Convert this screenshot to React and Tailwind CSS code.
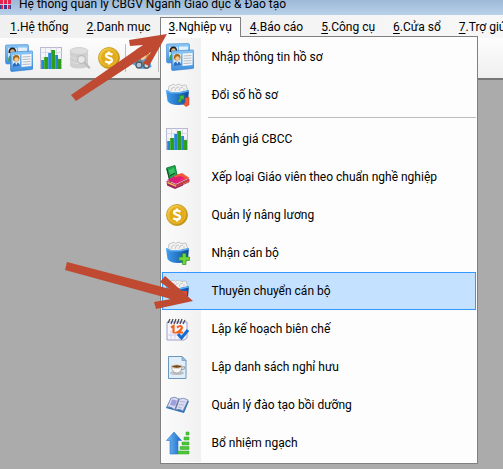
import React, { useState } from "react";

function CardsIcon() {
  return (
    <svg width="28" height="28" viewBox="0 0 28 28">
      <defs>
        <linearGradient id="card" x1="0" y1="0" x2="0" y2="1">
          <stop offset="0" stopColor="#8cc8f8" />
          <stop offset="1" stopColor="#3d8ede" />
        </linearGradient>
      </defs>
      <path d="M1.5 1 L22 .5 Q23.500 .5 23.500 2 V19 L2 20 Q.5 20 .5 18 V2 Q.5 1 1.500 1Z" fill="url(#card)" stroke="#3f86cc" strokeWidth=".6" />
      <path d="M3 4 H12 V17 H3Z" fill="#c8e4fa" />
      <path d="M3.500 9 Q3.500 3.500 7.500 3.500 Q11.500 3.500 11 9Z" fill="#1c1c1c" />
      <circle cx="7.500" cy="7.500" r="2.300" fill="#e8b880" />
      <path d="M3 17 Q3 11 7 11 L10 12 V17Z" fill="#37a347" />
      <path d="M13 3.500 H22 V8 H13Z" fill="#e4f0f9" />
      <path d="M6 8 L26.500 7 Q28 7 28 8.500 V24 Q28 25.500 26.500 25.500 L7 27.500 Q5.500 27.500 5.500 26 V9 Q5.500 8 6 8Z" fill="url(#card)" stroke="#347bc4" strokeWidth=".6" />
      <path d="M7.500 11 L15 10.500 V22.500 L7.500 23Z" fill="#d6ecfb" />
      <path d="M16.500 10.500 L26.500 10 V22 L16.500 23Z" fill="#f4f6f8" />
      <path d="M17.500 13 L25.500 12.500 M17.500 15.500 L25.500 15 M17.500 18 L25.500 17.500 M17.500 20.500 L25.500 20" stroke="#b1bbc5" strokeWidth="1" />
      <circle cx="11.200" cy="14.200" r="3.200" fill="#a8650f" />
      <circle cx="11.500" cy="15.500" r="2.200" fill="#f5c68e" />
      <path d="M7.500 23 Q7.500 18.500 11 18.500 Q15 18.500 15 22.500Z" fill="#2a6cc0" />
      <path d="M10.200 18.500 L11.300 21 L12.500 18.500Z" fill="#fff" />
    </svg>
  );
}

function ChartIcon() {
  return (
    <svg width="22" height="22" viewBox="0 0 22 22">
      <rect x=".5" y=".5" width="21" height="21" fill="#f4f5fb" stroke="#b8b8d0" />
      <path d="M5.500 0 V21 M11 0 V21 M16.500 0 V21 M0 5.500 H22 M0 11 H22 M0 16.500 H22" stroke="#ced0e2" strokeWidth=".7" />
      <path d="M1 13 H4 V22 H1Z M8 6 H11 V22 H8Z M15 8 H18 V22 H15Z" fill="#2884d8" />
      <path d="M4 10 H8 V22 H4Z M11 3 H15 V22 H11Z M18 12 H21 V22 H18Z" fill="#2f9c1d" />
      <path d="M1.500 13 V22 M8.500 6 V22 M15.500 8 V22" stroke="#4fa5e8" strokeWidth=".8" />
      <path d="M4.500 10 V22 M11.500 3 V22" stroke="#54b636" strokeWidth=".8" />
    </svg>
  );
}

function DatabaseIcon() {
  return (
    <svg width="22" height="22" viewBox="0 0 22 22">
      <path d="M1 4 V18 Q1 21.500 10 21.500 Q19 21.500 19 18 V4Z" fill="#d0d0d0" />
      <ellipse cx="10" cy="4" rx="9" ry="3.500" fill="#dedede" stroke="#c8c8c8" strokeWidth=".7" />
      <path d="M1 8.500 Q2 11.500 10 11.500 Q18 11.500 19 8.500 M1 13.500 Q2 16.500 10 16.500" fill="none" stroke="#dedede" />
      <circle cx="12.500" cy="12.500" r="4" fill="#e8e8e8" stroke="#bebebe" strokeWidth="1.300" />
      <path d="M15.500 15.500 L20 20.500" stroke="#bdbdbd" strokeWidth="2.500" strokeLinecap="round" />
    </svg>
  );
}

function CoinIcon() {
  return (
    <svg width="22" height="22" viewBox="0 0 22 22">
      <defs>
        <linearGradient id="coin" x1="0" y1="0" x2="1" y2="1">
          <stop offset="0" stopColor="#ffe05a" />
          <stop offset="1" stopColor="#b98200" />
        </linearGradient>
      </defs>
      <circle cx="11" cy="11" r="10.500" fill="url(#coin)" stroke="#c39213" strokeWidth=".8" />
      <circle cx="11" cy="11" r="8.300" fill="#e3ab18" stroke="#efc03a" strokeWidth=".8" />
      <path d="M14.500 7.800 Q11 5.500 8.500 7.200 Q6.800 9.500 11 10.800 Q15.300 12 13.500 14.500 Q11 16.500 7.200 14.200 M11 4.500 V7 M11 15 V17.500" fill="none" stroke="#fff" strokeWidth="2.300" />
    </svg>
  );
}

function FindUserIcon() {
  return (
    <svg width="22" height="22" viewBox="0 0 22 22">
      <path d="M1 17 Q3 11 11 11 Q20 11 20.500 20 Q16 22 11 22Z" fill="#5fa3e2" />
      <path d="M4 10 Q3 0 11 0 Q19 0 18 10 L15 12 H6Z" fill="#d99a50" />
      <path d="M7 6 Q11 3 15 6 Q15.500 13 11 13 Q6.500 13 7 6Z" fill="#f7cfa2" />
      <path d="M1 9 L5 8 L12 14 L17 15 L19 19 L15 21 L9 18 L4 16Z" fill="#7d8790" />
      <circle cx="8" cy="18" r="3" fill="#a9c6de" stroke="#4f5962" strokeWidth="1.300" />
      <circle cx="15.500" cy="18.500" r="2.700" fill="#c3d8e9" stroke="#4f5962" strokeWidth="1.300" />
    </svg>
  );
}

// blue box of files, shared by three entries with a different badge
function BoxIcon({ badge }) {
  return (
    <svg width="24" height="24" viewBox="0 0 24 24">
      <defs>
        <linearGradient id="box" x1="0" y1="0" x2="1" y2="0">
          <stop offset="0" stopColor="#3f9fec" />
          <stop offset="1" stopColor="#0d4aa3" />
        </linearGradient>
      </defs>
      <path d="M2 9 L3 3 L8 1 L9.500 2.500 L13 1 L15 2.500 L20 2 L22 8 L20 10 H4Z" fill="#f1f1f1" stroke="#b4b4b4" strokeWidth=".7" />
      <path d="M5 8 L6 5 L9 4 M9 8 L10 5 L13 4 M13 8 L14 5 L17 4 M18 8 V5" fill="none" stroke="#b9b9b9" strokeWidth=".7" />
      <path d="M0 7 L5 9 L14 9 L23 7 L22 18 Q21 22 12 22 Q4 22 1.500 18Z" fill="url(#box)" />
      <path d="M0 7 L5 9 L14 9 L23 7 V8.500 L14 10.500 H5 L.2 8.500Z" fill="#62b0ef" />
      {badge === "swap" && (
        <>
          <path d="M13 13 L18 12 V17 L16 16 L14 20 L12 18 L14 15Z" fill="#43bd35" stroke="#268020" strokeWidth=".5" />
          <path d="M19 15 L23 14 V22 L20 23.500 L17 21 L19 20Z" fill="#ed5735" stroke="#c13d24" strokeWidth=".5" />
        </>
      )}
      {badge === "plus" && <path d="M16.500 12.500 H20 V16 H23.500 V19.500 H20 V23.500 H16.500 V19.500 H13 V16 H16.500Z" fill="#70d638" stroke="#329425" strokeWidth=".7" />}
      {badge === "minus" && <path d="M15 12 H21 V17 H15Z" fill="#db4e35" />}
    </svg>
  );
}

function BooksIcon() {
  return (
    <svg width="24" height="24" viewBox="0 0 24 24">
      <path d="M.5 3 L9 .5 L11.500 12 L4 17Z" fill="#20a94c" stroke="#0b6b2b" strokeWidth=".8" />
      <path d="M3 5 L8 3 L9 8 L4 9Z" fill="#38c767" />
      <path d="M1 4 L4 16 M4 11 L9 8" stroke="#15452a" strokeWidth="1" />
      <path d="M1 15 L13 9 L23 13 L10 19Z" fill="#d9207b" />
      <path d="M8 11 L16 8 L23.500 13 L12 16Z" fill="#f15a35" />
      <path d="M5 14 L14 11 L19 13 L10 17Z" fill="#df1d78" />
      <path d="M1 16 L10 20 L23 14 V17 L10 22.500 L1 18.500Z" fill="#f0c24b" stroke="#aa2454" strokeWidth=".8" />
      <path d="M10 20 L23 14 V16 L10 22Z" fill="#c43347" />
      <path d="M1 18.500 L10 22 L17 19 V20.500 L9 24 L1 20.500Z" fill="#9d245d" />
    </svg>
  );
}

function CalendarIcon() {
  return (
    <svg width="23" height="23" viewBox="0 0 23 23">
      <path d="M1 4 H21 V20 L18 22 H1Z" fill="#f5f5ff" stroke="#8b8bb8" strokeWidth=".8" />
      <path d="M2 17 H20 M5 12 V21 M9 16 V21 M13 16 V21" stroke="#c9c8e8" strokeWidth=".8" />
      <path d="M2 5 L4 1 M5 6 L7 1 M8 6 L10 1 M11 6 L13 1 M14 6 L16 1 M17 6 L19 2" stroke="#434352" strokeWidth="1.200" />
      <path d="M5 9.500 L7.500 8 V15 M11 9.500 Q15 6.500 16 9.500 Q15.500 12 11 14.500 H17" fill="none" stroke="#f36318" strokeWidth="2.200" />
      <path d="M12 16 L15.500 20 L22 12" fill="none" stroke="#166ed2" strokeWidth="3" />
    </svg>
  );
}

function CoffeeIcon() {
  return (
    <svg width="23" height="23" viewBox="0 0 23 23">
      <path d="M2.500 .5 H16 L20 4.500 V22.500 H2.500Z" fill="#e0eefa" stroke="#6b96be" />
      <path d="M16 .5 V4.500 H20Z" fill="#9ec4e2" stroke="#6b96be" strokeWidth=".7" />
      <ellipse cx="11" cy="17" rx="7" ry="2" fill="#bdbfc3" />
      <path d="M5.500 10 Q6 17 11 17 Q15.500 17 16 10Z" fill="#f7f7f7" stroke="#96999e" strokeWidth=".7" />
      <ellipse cx="10.800" cy="10.500" rx="5" ry="1.800" fill="#754516" stroke="#eadfce" />
      <path d="M16 11 Q20 10 18 13 L15 14" fill="none" stroke="#999da2" strokeWidth="1.200" />
    </svg>
  );
}

function BookIcon() {
  return (
    <svg width="23" height="23" viewBox="0 0 23 23">
      <path d="M5 4 L23 7 L18 19 L0 14Z" fill="#2872b7" />
      <path d="M5 4 Q9 2 13 5 Q18 3 22 6 L17 17 Q13 14 9 16 Q5 12 1 13Z" fill="#d9dcf3" stroke="#7686ad" strokeWidth=".8" />
      <path d="M13 5 L9 16" stroke="#6e75a0" strokeWidth="1.500" />
      <path d="M6 5.500 L11 6.500 L9 12 L4 11Z" fill="#9da0dc" />
      <path d="M14 7.500 L19 8 M13 10.500 L18 11 M12 13 L16 14" stroke="#b3b8d4" />
    </svg>
  );
}

function PromoteIcon() {
  return (
    <svg width="24" height="24" viewBox="0 0 24 24">
      <defs>
        <linearGradient id="up" x1="0" y1="0" x2="1" y2="0">
          <stop offset="0" stopColor="#70bff6" />
          <stop offset="1" stopColor="#1b66c9" />
        </linearGradient>
      </defs>
      <path d="M8 1 L15.500 9.500 H12 V23 H4 V9.500 H.5Z" fill="url(#up)" stroke="#2b74c4" strokeWidth=".6" />
      <path d="M20 1 H23 V4 H20Z M18 6 H23 V9 H18Z M16 11 H23 V14 H16Z M14 15.500 H23 V18.500 H14Z M12 20 H23 V23 H12Z" fill="#4cc738" stroke="#32a128" strokeWidth=".5" />
    </svg>
  );
}

const menus = [
  { key: "1", label: "Hệ thống" },
  { key: "2", label: "Danh mục" },
  { key: "3", label: "Nghiệp vụ" },
  { key: "4", label: "Báo cáo" },
  { key: "5", label: "Công cụ" },
  { key: "6", label: "Cửa sổ" },
  { key: "7", label: "Trợ giúp" },
];

const items = [
  { label: "Nhập thông tin hồ sơ", icon: <CardsIcon /> },
  { label: "Đổi số hồ sơ", icon: <BoxIcon badge="swap" />, divider: true },
  { label: "Đánh giá CBCC", icon: <ChartIcon /> },
  { label: "Xếp loại Giáo viên theo chuẩn nghề nghiệp", icon: <BooksIcon /> },
  { label: "Quản lý nâng lương", icon: <CoinIcon /> },
  { label: "Nhận cán bộ", icon: <BoxIcon badge="plus" /> },
  { label: "Thuyên chuyển cán bộ", icon: <BoxIcon badge="minus" /> },
  { label: "Lập kế hoạch biên chế", icon: <CalendarIcon /> },
  { label: "Lập danh sách nghỉ hưu", icon: <CoffeeIcon /> },
  { label: "Quản lý đào tạo bồi dưỡng", icon: <BookIcon /> },
  { label: "Bổ nhiệm ngạch", icon: <PromoteIcon /> },
];

function DropDown({ active, onPick }) {
  return (
    <div className="absolute -left-px top-full z-10 w-[318px] border border-[#808080] bg-[#fdfdfd] p-px">
      <ul className="bg-linear-to-r from-[#fbfbfb] to-[#f1f1f1] bg-[length:39px_100%] bg-no-repeat">
        {items.map((item) => (
          <li key={item.label}>
            <button
              type="button"
              onClick={() => onPick(item.label)}
              className={`flex h-[38px] w-full items-center border text-left ${active === item.label ? "border-[#3399ff] bg-[#c4e1ff]" : "border-transparent"}`}
            >
              <span className="w-[46px] shrink-0 pl-[3px]">{item.icon}</span>
              <span className="whitespace-nowrap pl-[3px]">{item.label}</span>
            </button>
            {item.divider && <hr className="mt-[3px] mb-[2px] ml-[46px] border-[#bdbdbd]" />}
          </li>
        ))}
      </ul>
    </div>
  );
}

export default function App() {
  const [open, setOpen] = useState("3");
  const [active, setActive] = useState("Thuyên chuyển cán bộ");

  return (
    <div className="relative flex min-h-screen flex-col overflow-hidden bg-[#ababab] font-['Roboto','Noto_Sans',sans-serif] text-[12px] text-black">
      <header className="flex h-[15px] items-start gap-2 bg-linear-to-b from-[#9db9d7] to-[#b9d1ea]">
        <svg width="11" height="10" viewBox="0 0 11 10">
          <path d="M0 0 H11 V9 H0Z" fill="#343f91" />
          <path d="M0 0 H3 V4 H0Z M4 0 H7 V4 H4Z M8 0 H11 V4 H8Z M1 5 H4 V9 H1Z M7 5 H10 V9 H7Z" fill="#e2244e" />
          <path d="M3.500 0 V9 M7.500 0 V9 M0 4.500 H11" stroke="#e9e3f5" strokeWidth=".8" />
        </svg>
        <h1 className="whitespace-nowrap leading-[8px]">Hệ thống quản lý CBGV Ngành Giáo dục &amp; Đào tạo</h1>
      </header>

      <nav className="flex h-[23px] bg-linear-to-r from-[#f0f0f0] to-[#f7f7f7] pl-px pt-[2px]">
        {menus.map((menu) => (
          <div
            key={menu.key}
            className={`relative h-[19px] shrink-0 border border-b-0 ${open === menu.key ? "border-[#808080] bg-[#fdfdfd]" : "border-transparent"}`}
          >
            <button type="button" onClick={() => setOpen(menu.key)} className="h-full whitespace-nowrap px-2 leading-[19px]">
              <span className="underline underline-offset-2">{menu.key}</span>.{menu.label}
            </button>
            {open === menu.key && menu.key === "3" && (
              <>
                <DropDown active={active} onPick={setActive} />
                <span className="absolute inset-x-0 top-full z-20 h-px bg-[#fdfdfd]" />
              </>
            )}
          </div>
        ))}
      </nav>

      <div className="flex h-[42px] items-center gap-[5px] border-b-2 border-[#777] bg-linear-to-b from-[#fdfdfd] to-[#efefef] px-[5px]">
        <div className="flex items-center gap-[7px]">
          <button type="button" aria-label="Nhập thông tin hồ sơ"><CardsIcon /></button>
          <button type="button" aria-label="Đánh giá CBCC"><ChartIcon /></button>
          <button type="button" aria-label="Tra cứu dữ liệu"><DatabaseIcon /></button>
          <button type="button" aria-label="Quản lý nâng lương"><CoinIcon /></button>
        </div>
        <span className="h-7 w-px bg-[#bdbdbd]" />
        <button type="button" aria-label="Tìm cán bộ"><FindUserIcon /></button>
        <span className="h-7 w-px bg-[#bdbdbd]" />
      </div>

      {/* pointers drawn over the window */}
      <svg className="pointer-events-none absolute left-0 top-0 z-30" width="200" height="320" viewBox="0 0 200 320" fill="#bf4a31">
        <path d="M71 95 L143 45 L130 46 L129 40 L167 34 L149 66 L143 63 L151 52 L76 101Z" />
        <path d="M67 262 L170 289 L160 282 L165 276 L193 301 L156 309 L154 302 L171 299 L65 270Z" />
      </svg>
    </div>
  );
}
